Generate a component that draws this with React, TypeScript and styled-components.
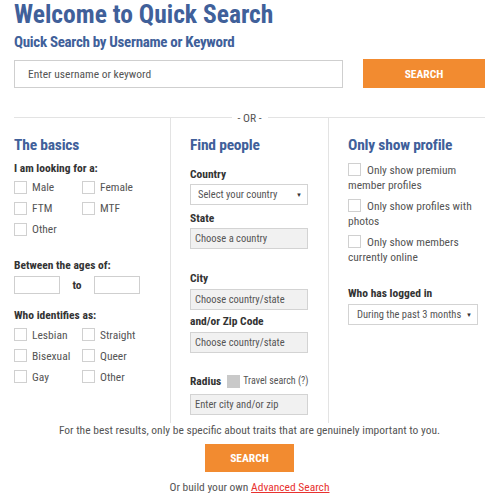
import React from "react";
import styled, { createGlobalStyle } from "styled-components";

const Global = createGlobalStyle`
  html, body { margin: 0; padding: 0; background: #fff; }
  body { font-family: "Roboto Condensed", Roboto, "Liberation Sans", sans-serif; font-stretch: condensed; color: #555; }
  * { box-sizing: border-box; }
`;

const HEAD = `"Roboto Condensed", Roboto, "Liberation Sans", sans-serif`;

const Page = styled.div`
  width: 500px;
  padding: 0 15px 0 14px;
`;

const Title = styled.h1`
  margin: 0;
  font-family: ${HEAD};
  font-weight: 700;
  font-size: 25.5px;
  line-height: 29px;
  color: #40609a;
`;

const Subtitle = styled.h2`
  margin: 4px 0 0;
  font-family: ${HEAD};
  font-weight: 700;
  font-size: 15px;
  letter-spacing: -0.3px;
  line-height: 18px;
  color: #40609a;
`;

const SearchRow = styled.div`
  display: flex;
  align-items: center;
  gap: 20px;
  margin-top: 8px;
`;

const KeywordInput = styled.div`
  flex: 0 0 329px;
  height: 28px;
  border: 1px solid #cfcfcf;
  padding-left: 13px;
  display: flex;
  align-items: center;
  font-size: 11.5px;
  color: #555;
`;

const OrangeButton = styled.div<{ $w: number; $h: number; $mt?: number }>`
  width: ${(p) => p.$w}px;
  height: ${(p) => p.$h}px;
  margin-top: ${(p) => p.$mt || 0}px;
  background: #f28b30;
  color: #fff;
  font-family: ${HEAD};
  font-weight: 700;
  font-size: 11.5px;
  display: flex;
  align-items: center;
  justify-content: center;
`;

const OrRow = styled.div`
  display: flex;
  align-items: center;
  gap: 6px;
  margin-top: 22.5px;
  font-size: 11.5px;
  line-height: 14px;
  color: #555;
  &::before, &::after {
    content: "";
    flex: 1;
    border-top: 1px solid #e3e3e3;
  }
`;

const Columns = styled.div`
  display: grid;
  grid-template-columns: 156px 158px 157px;
  margin-top: -7px;
  height: 305px;
`;

const Col = styled.div<{ $first?: boolean }>`
  padding: 15px 0 0 ${(p) => (p.$first ? 0 : 19)}px;
  border-left: ${(p) => (p.$first ? "none" : "1px solid #e3e3e3")};
  display: flex;
  flex-direction: column;
  align-items: flex-start;
`;

const ColTitle = styled.h3`
  margin: 0;
  font-family: ${HEAD};
  font-weight: 700;
  font-size: 15.5px;
  letter-spacing: -0.2px;
  line-height: 24px;
  color: #40609a;
`;

const Label = styled.div<{ $mt: number }>`
  margin-top: ${(p) => p.$mt}px;
  font-size: 11.5px;
  font-weight: 700;
  line-height: 14px;
  color: #333;
  display: flex;
  align-items: center;
`;

const CheckGrid = styled.div`
  display: grid;
  grid-template-columns: 68px 70px;
  row-gap: 8px;
  margin-top: 6px;
`;

const CheckItem = styled.label`
  display: flex;
  align-items: center;
  gap: 5px;
  font-size: 11.5px;
  color: #555;
  height: 13px;
`;

const Box = styled.span<{ $filled?: boolean }>`
  width: 13px;
  height: 13px;
  flex: 0 0 13px;
  border: 1px solid ${(p) => (p.$filled ? "#c9c9c9" : "#d0d0d0")};
  background: ${(p) => (p.$filled ? "#c9c9c9" : "#fff")};
  display: inline-block;
`;

const AgeRow = styled.div`
  display: flex;
  align-items: center;
  margin-top: 4.5px;
  font-size: 11.5px;
  font-weight: 700;
  color: #333;
`;

const AgeBox = styled.div`
  width: 46px;
  height: 18px;
  border: 1px solid #cfcfcf;
`;

const To = styled.span`
  width: 34px;
  text-align: center;
`;

const Field = styled.div<{ $grey?: boolean; $w: number; $mt: number; $pl: number }>`
  margin-top: ${(p) => p.$mt}px;
  width: ${(p) => p.$w}px;
  height: 21px;
  flex: 0 0 21px;
  border: 1px solid #d3d3d3;
  background: ${(p) => (p.$grey ? "#f1f1f1" : "#fff")};
  display: flex;
  align-items: center;
  justify-content: space-between;
  padding: 0 5px 0 ${(p) => p.$pl}px;
  font-size: 10.5px;
  color: #555;
  white-space: nowrap;
`;

const Caret = styled.span`
  font-size: 6px;
  color: #333;
`;

const RadiusBox = styled(Box)`
  margin: 0 3px 0 6px;
`;

const Small = styled.span`
  font-size: 10px;
  font-weight: 400;
  color: #555;
`;

const OptList = styled.div`
  display: flex;
  flex-direction: column;
  gap: 6px;
  margin-top: 6px;
`;

const Opt = styled.div`
  font-size: 11.5px;
  line-height: 15px;
  color: #555;
  width: 138px;
  & > span:first-child {
    vertical-align: -2px;
    margin-right: 6px;
  }
`;

const Footer = styled.div`
  display: flex;
  flex-direction: column;
  align-items: center;
  font-size: 11.5px;
  color: #555;
`;

const Note = styled.div`
  line-height: 14px;
`;

const Build = styled.div`
  margin-top: 7.5px;
  line-height: 14px;
`;

const Link = styled.a`
  color: #e8322f;
  text-decoration: underline;
`;

export default function App() {
  return (
    <>
      <Global />
      <Page>
        <Title>Welcome to Quick Search</Title>
        <Subtitle>Quick Search by Username or Keyword</Subtitle>
        <SearchRow>
          <KeywordInput>Enter username or keyword</KeywordInput>
          <OrangeButton $w={122} $h={29}>SEARCH</OrangeButton>
        </SearchRow>
        <OrRow>- OR -</OrRow>
        <Columns>
          <Col $first>
            <ColTitle>The basics</ColTitle>
            <Label $mt={4}>I am looking for a:</Label>
            <CheckGrid>
              <CheckItem><Box />Male</CheckItem>
              <CheckItem><Box />Female</CheckItem>
              <CheckItem><Box />FTM</CheckItem>
              <CheckItem><Box />MTF</CheckItem>
              <CheckItem><Box />Other</CheckItem>
            </CheckGrid>
            <Label $mt={22}>Between the ages of:</Label>
            <AgeRow>
              <AgeBox />
              <To>to</To>
              <AgeBox />
            </AgeRow>
            <Label $mt={14}>Who identifies as:</Label>
            <CheckGrid>
              <CheckItem><Box />Lesbian</CheckItem>
              <CheckItem><Box />Straight</CheckItem>
              <CheckItem><Box />Bisexual</CheckItem>
              <CheckItem><Box />Queer</CheckItem>
              <CheckItem><Box />Gay</CheckItem>
              <CheckItem><Box />Other</CheckItem>
            </CheckGrid>
          </Col>
          <Col>
            <ColTitle>Find people</ColTitle>
            <Label $mt={10}>Country</Label>
            <Field $w={118} $mt={3.5} $pl={7}>Select your country<Caret>▼</Caret></Field>
            <Label $mt={5.5}>State</Label>
            <Field $grey $w={118} $mt={3.5} $pl={4}>Choose a country</Field>
            <Label $mt={21.5}>City</Label>
            <Field $grey $w={118} $mt={4} $pl={4}>Choose country/state</Field>
            <Label $mt={4.5}>and/or Zip Code</Label>
            <Field $grey $w={118} $mt={3.5} $pl={4}>Choose country/state</Field>
            <Label $mt={21.5}>Radius<RadiusBox $filled /><Small>Travel search (?)</Small></Label>
            <Field $grey $w={118} $mt={5.5} $pl={4}>Enter city and/or zip</Field>
          </Col>
          <Col>
            <ColTitle>Only show profile</ColTitle>
            <OptList>
              <Opt><Box />Only show premium member profiles</Opt>
              <Opt><Box />Only show profiles with photos</Opt>
              <Opt><Box />Only show members currently online</Opt>
            </OptList>
            <Label $mt={21}>Who has logged in</Label>
            <Field $w={130} $mt={4.5} $pl={8}>During the past 3 months<Caret>▼</Caret></Field>
          </Col>
        </Columns>
        <Footer>
          <Note>For the best results, only be specific about traits that are genuinely important to you.</Note>
          <OrangeButton $w={89} $h={28} $mt={7.5}>SEARCH</OrangeButton>
          <Build>Or build your own <Link>Advanced Search</Link></Build>
        </Footer>
      </Page>
    </>
  );
}
